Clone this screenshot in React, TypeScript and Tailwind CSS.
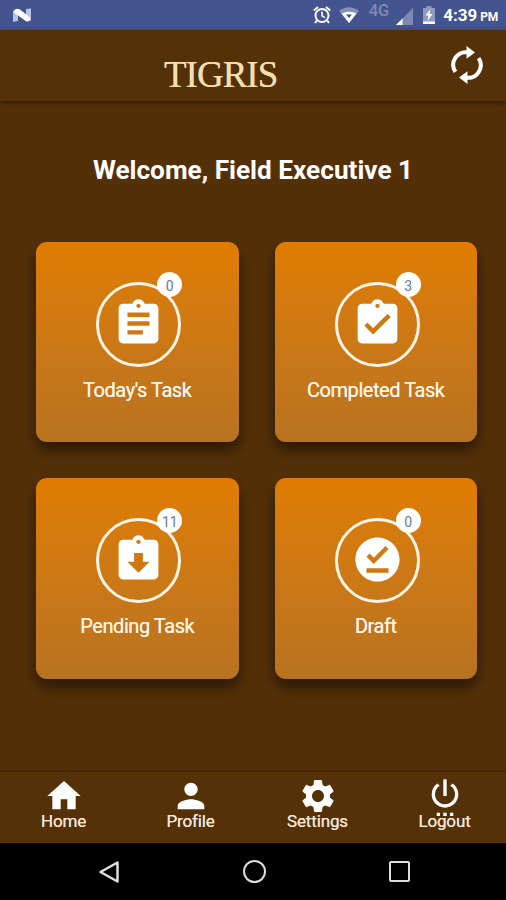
import type { IconType } from "react-icons"
import {
  MdAssignment,
  MdAssignmentReturned,
  MdAssignmentTurnedIn,
  MdHome,
  MdOfflinePin,
  MdPerson,
  MdSettings,
  MdSettingsPower,
} from "react-icons/md"

interface Task {
  label: string
  count: number
  icon: IconType
}

const tasks: Task[] = [
  { label: "Today's Task", count: 0, icon: MdAssignment },
  { label: "Completed Task", count: 3, icon: MdAssignmentTurnedIn },
  { label: "Pending Task", count: 11, icon: MdAssignmentReturned },
  { label: "Draft", count: 0, icon: MdOfflinePin },
]

const tabs: { label: string; icon: IconType }[] = [
  { label: "Home", icon: MdHome },
  { label: "Profile", icon: MdPerson },
  { label: "Settings", icon: MdSettings },
  { label: "Logout", icon: MdSettingsPower },
]

function StatusBar() {
  return (
    <div className="flex h-[30px] items-center bg-[#43548e] pr-[8px] pl-[13px] text-white">
      <svg className="h-[15px] w-[18px]" viewBox="0 0 18 15">
        <path d="M0 2.5L5 5v8L0 14zM13 1l5-.5V13l-5-2z" fill="#b9c4e4" />
        <path d="M1 2.500Q3-.5 7 1.500L16.500 9Q18 14 13.500 13.500L1.500 5z" fill="#fff" />
      </svg>
      <div className="flex-1" />

      {/* Alarm */}
      <svg className="mr-[8px] h-[18px] w-[18px]" viewBox="0 0 18 18" fill="none" stroke="#fff">
        <circle cx="9" cy="9.500" r="6.500" strokeWidth="2" />
        <path d="M.8 4.500L5 1M17.200 4.500L13 1M3.800 14.500L2 17M14.200 14.500L16 17" strokeWidth="2" />
        <path d="M9 5.500v4.300l3 1.800" strokeWidth="1.600" />
      </svg>

      {/* Wifi */}
      <svg className="mr-[10px] h-4 w-5" viewBox="0 0 20 16">
        <path d="M0 4Q10-3.500 20 4L10 16z" fill="#8791b8" />
        <path d="M2.500 6.500Q10 3 17.500 6.500L10 16z" fill="#fff" />
        <path d="M7 7.500h6L10 11z" fill="#43548e" />
      </svg>

      <span className="mr-[7px] -mt-[8px] font-['Roboto'] text-[16.500px] leading-none font-medium text-[#7e8ab5]">4G</span>

      {/* Signal */}
      <svg className="mt-[3px] mr-[10px] h-[17px] w-[17px]" viewBox="0 0 17 17">
        <path d="M17 0v17H0z" fill="#7e8ab5" />
        <path d="M6.500 10.500V17H0z" fill="#fff" />
      </svg>

      {/* Battery */}
      <svg className="mr-[8px] h-[18px] w-3" viewBox="0 0 12 18">
        <path d="M3.500 0h5v2H12v16H0V2h3.500z" fill="#8f9ac0" />
        <path d="M0 15.500h12V18H0z" fill="#fff" />
        <path d="M7.500 3L2.500 9.500h3L4.500 15l5-7h-3z" fill="#fff" />
      </svg>

      <span className="font-['Roboto'] text-[17px] leading-none font-bold whitespace-nowrap">
        4:39<span className="ml-[3px] text-[12px] tracking-[-0.3px]">PM</span>
      </span>
    </div>
  )
}

function RefreshIcon() {
  return (
    <svg className="-mt-[2px] h-[42px] w-8" viewBox="0 0 32 42" fill="none">
      <path d="M4.400 27.800A12.600 12.600 0 0 1 17 8.400M27.600 14.200A12.600 12.600 0 0 1 15 33.600" stroke="#fff" strokeWidth="4" />
      <path d="M15.500 2v12.800l8.500-6.400zM16.500 27.200v12.800l-8.500-6.400z" fill="#fff" />
    </svg>
  )
}

function TaskCard({ label, count, icon: Icon }: Task) {
  return (
    <div className="flex flex-col items-center rounded-[11px] bg-gradient-to-b from-[#e07d00] to-[#b87320] pt-10 shadow-[0_8px_14px_rgba(0,0,0,0.5)]">
      <div className="relative ml-[3px] flex h-[85px] w-[85px] items-center justify-center rounded-full border-3 border-[#fff4e6]">
        <Icon className="-mt-[2px] h-[53px] w-[53px] text-white" />
        <span className="absolute -top-[13px] right-[-4px] flex h-[25px] w-[25px] items-center justify-center rounded-full bg-white pt-[2px] text-sm text-[#6a7898]">
          {count}
        </span>
      </div>
      <span className="mt-[9px] text-[20px] leading-7 tracking-[-0.450px] text-[#fff4e6] [text-shadow:0_0_0.5px_#fff4e6]">{label}</span>
    </div>
  )
}

export default function App() {
  return (
    <div className="flex h-[900px] w-[506px] flex-col overflow-hidden bg-[#533008] font-['Roboto',sans-serif]">
      <StatusBar />

      <header className="relative flex h-[71px] items-center justify-between bg-[#553108] pr-[23px] pl-[164px] shadow-[0_2px_5px_rgba(30,12,0,0.6)]">
        <h1 className="mt-[18px] font-['Liberation_Serif',serif] text-[37px] leading-none tracking-[-1px] text-[#f5dfae] [text-shadow:0_0_0.6px_#f5dfae]">TIGRIS</h1>
        <RefreshIcon />
      </header>

      <main className="flex-1 px-9">
        <h2 className="mt-[53px] text-center text-[26.200px] leading-8 font-bold text-white">Welcome, Field Executive 1</h2>
        <div className="mt-[56px] mr-[-7px] grid grid-cols-2 grid-rows-[200px_201px] gap-9">
          {tasks.map((task) => (
            <TaskCard key={task.label} {...task} />
          ))}
        </div>
      </main>

      <nav className="-mr-[2px] grid h-[71px] grid-cols-4 bg-[#553108] shadow-[0_-1px_4px_rgba(30,12,0,0.4)]">
        {tabs.map(({ label, icon: Icon }) => (
          <div key={label} className="flex flex-col items-center pt-[4px]">
            <Icon className="h-10 w-10 shrink-0 text-white" />
            <span className="-mt-[5px] text-[17px] leading-5 tracking-[-0.150px] text-[#f5e6d8] [text-shadow:0_0_0.5px_#f5e6d8]">{label}</span>
          </div>
        ))}
      </nav>

      {/* Android navigation keys */}
      <div className="flex h-[57px] items-center justify-between bg-black pr-[96px] pl-[99px]">
        <svg className="h-[22px] w-5" viewBox="0 0 20 22">
          <path d="M18.500 1.500v19L1.500 11z" fill="none" stroke="#dedede" strokeWidth="2.500" strokeLinejoin="round" />
        </svg>
        <div className="h-[23px] w-[23px] rounded-full border-[2.500px] border-[#dedede]" />
        <div className="h-[21px] w-[21px] rounded-[2px] border-[2.500px] border-[#dedede]" />
      </div>
    </div>
  )
}
